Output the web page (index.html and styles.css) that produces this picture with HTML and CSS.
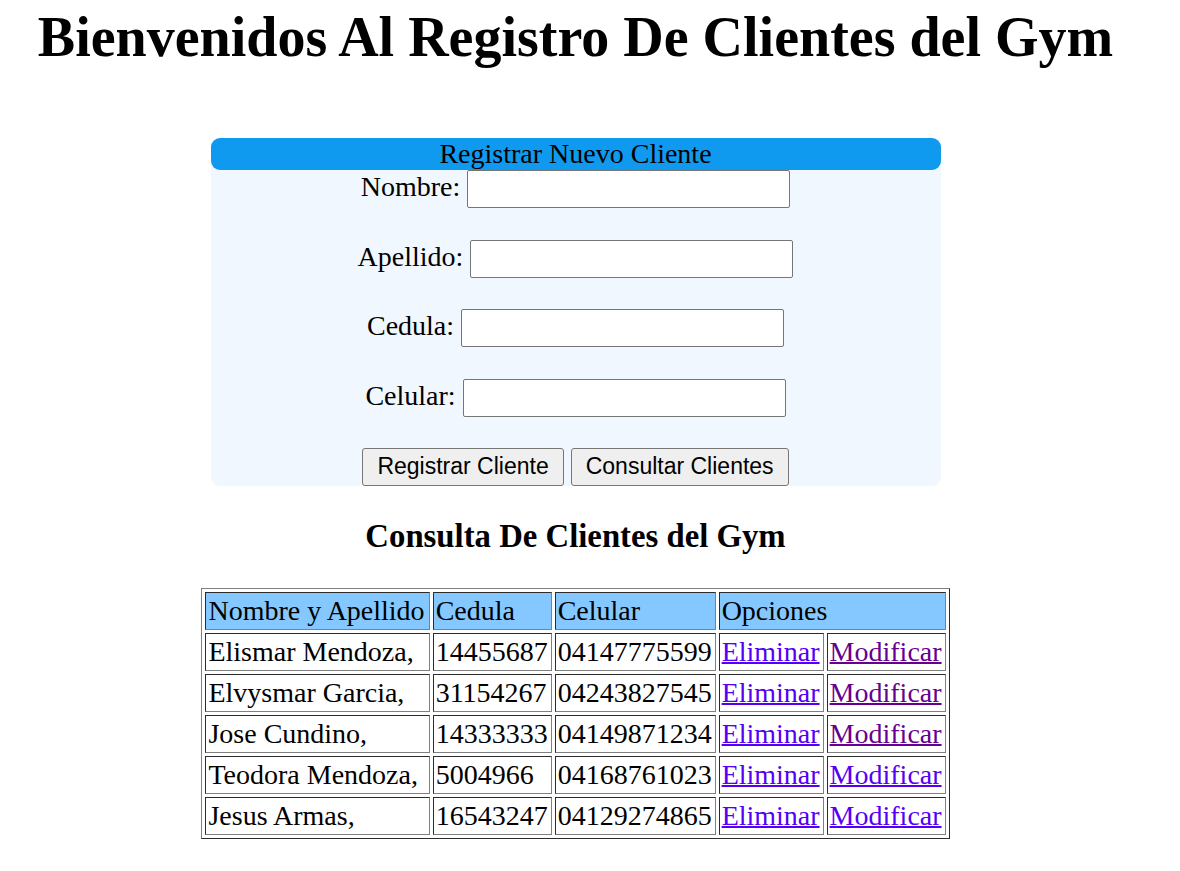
FILE: index.html
```html
<!DOCTYPE html>
<html lang="es">
<head>
<meta charset="utf-8">
<title>Registro de Clientes</title>
<link rel="stylesheet" href="styles.css">
</head>
<body>
<main class="page">
  <h1 class="title">Bienvenidos Al Registro De Clientes del Gym</h1>
  <form class="form">
    <div class="form-head">Registrar Nuevo Cliente</div>
    <div class="fields">
      <div class="field"><label class="label" for="nombre">Nombre:</label><input class="text" type="text" id="nombre"></div>
      <div class="field"><label class="label" for="apellido">Apellido:</label><input class="text" type="text" id="apellido"></div>
      <div class="field"><label class="label" for="cedula">Cedula:</label><input class="text" type="text" id="cedula"></div>
      <div class="field"><label class="label" for="celular">Celular:</label><input class="text" type="text" id="celular"></div>
      <div class="field"><button class="btn" type="button">Registrar Cliente</button><button class="btn" type="button">Consultar Clientes</button></div>
    </div>
  </form>
  <h3 class="subtitle">Consulta De Clientes del Gym</h3>
  <table class="clients">
    <thead>
      <tr class="head"><th class="name">Nombre y Apellido</th><th>Cedula</th><th>Celular</th><th colspan="2">Opciones</th></tr>
    </thead>
    <tbody>
      <tr><td>Elismar Mendoza,</td><td>14455687</td><td>04147775599</td><td><a class="link" href="#">Eliminar</a></td><td><a class="link seen" href="#">Modificar</a></td></tr>
      <tr><td>Elvysmar Garcia,</td><td>31154267</td><td>04243827545</td><td><a class="link" href="#">Eliminar</a></td><td><a class="link seen" href="#">Modificar</a></td></tr>
      <tr><td>Jose Cundino,</td><td>14333333</td><td>04149871234</td><td><a class="link" href="#">Eliminar</a></td><td><a class="link seen" href="#">Modificar</a></td></tr>
      <tr><td>Teodora Mendoza,</td><td>5004966</td><td>04168761023</td><td><a class="link" href="#">Eliminar</a></td><td><a class="link" href="#">Modificar</a></td></tr>
      <tr><td>Jesus Armas,</td><td>16543247</td><td>04129274865</td><td><a class="link" href="#">Eliminar</a></td><td><a class="link" href="#">Modificar</a></td></tr>
    </tbody>
  </table>
</main>
</body>
</html>
```
FILE: styles.css
```css
body {
  margin: 0;
  background: #fff;
  color: #000;
  font-family: "Liberation Serif", "Times New Roman", serif;
  font-size: 28px;
  line-height: 32px;
}

.page {
  display: flex;
  flex-direction: column;
  align-items: center;
  padding: 5px 29px 32px 0;
}

.title {
  margin: 0 0 69px;
  font-size: 56px;
  line-height: 64px;
  text-align: center;
}

.form {
  width: 100%;
  max-width: 730px;
  background: #f0f7ff;
  border-radius: 9px;
}

.form-head {
  background: #0f9af0;
  border-radius: 9px;
  text-align: center;
}

.fields {
  display: flex;
  flex-direction: column;
  justify-content: space-between;
  min-height: 316px;
}

.field {
  display: flex;
  justify-content: center;
  align-items: flex-start;
  gap: 7px;
}

.label {
  line-height: 34px;
}

.text {
  box-sizing: border-box;
  width: 323px;
  height: 38px;
  padding: 2px 4px;
  border: 1px solid #767676;
  border-radius: 2px;
  background: #fff;
  font: 23px "Liberation Sans", Arial, sans-serif;
}

.btn {
  box-sizing: border-box;
  height: 38px;
  padding: 0 14px 2px;
  border: 1px solid #767676;
  border-radius: 3px;
  background: #efefef;
  color: #000;
  font: 23px "Liberation Sans", Arial, sans-serif;
}

.subtitle {
  margin: 30px 0 32px;
  font-size: 1.17em;
  line-height: 40px;
}

.clients {
  border: 1px outset gray;
  border-collapse: separate;
  border-spacing: 3px;
}

.clients th,
.clients td {
  padding: 2px 3px 2px 2px;
  border: 1px inset gray;
  font-weight: normal;
  text-align: left;
}

.clients .name {
  padding-right: 4px;
}

.head {
  background: #85c8ff;
}

.link {
  color: #5500f5;
  text-decoration-thickness: 2px;
}

.link.seen {
  color: #660090;
}
```
